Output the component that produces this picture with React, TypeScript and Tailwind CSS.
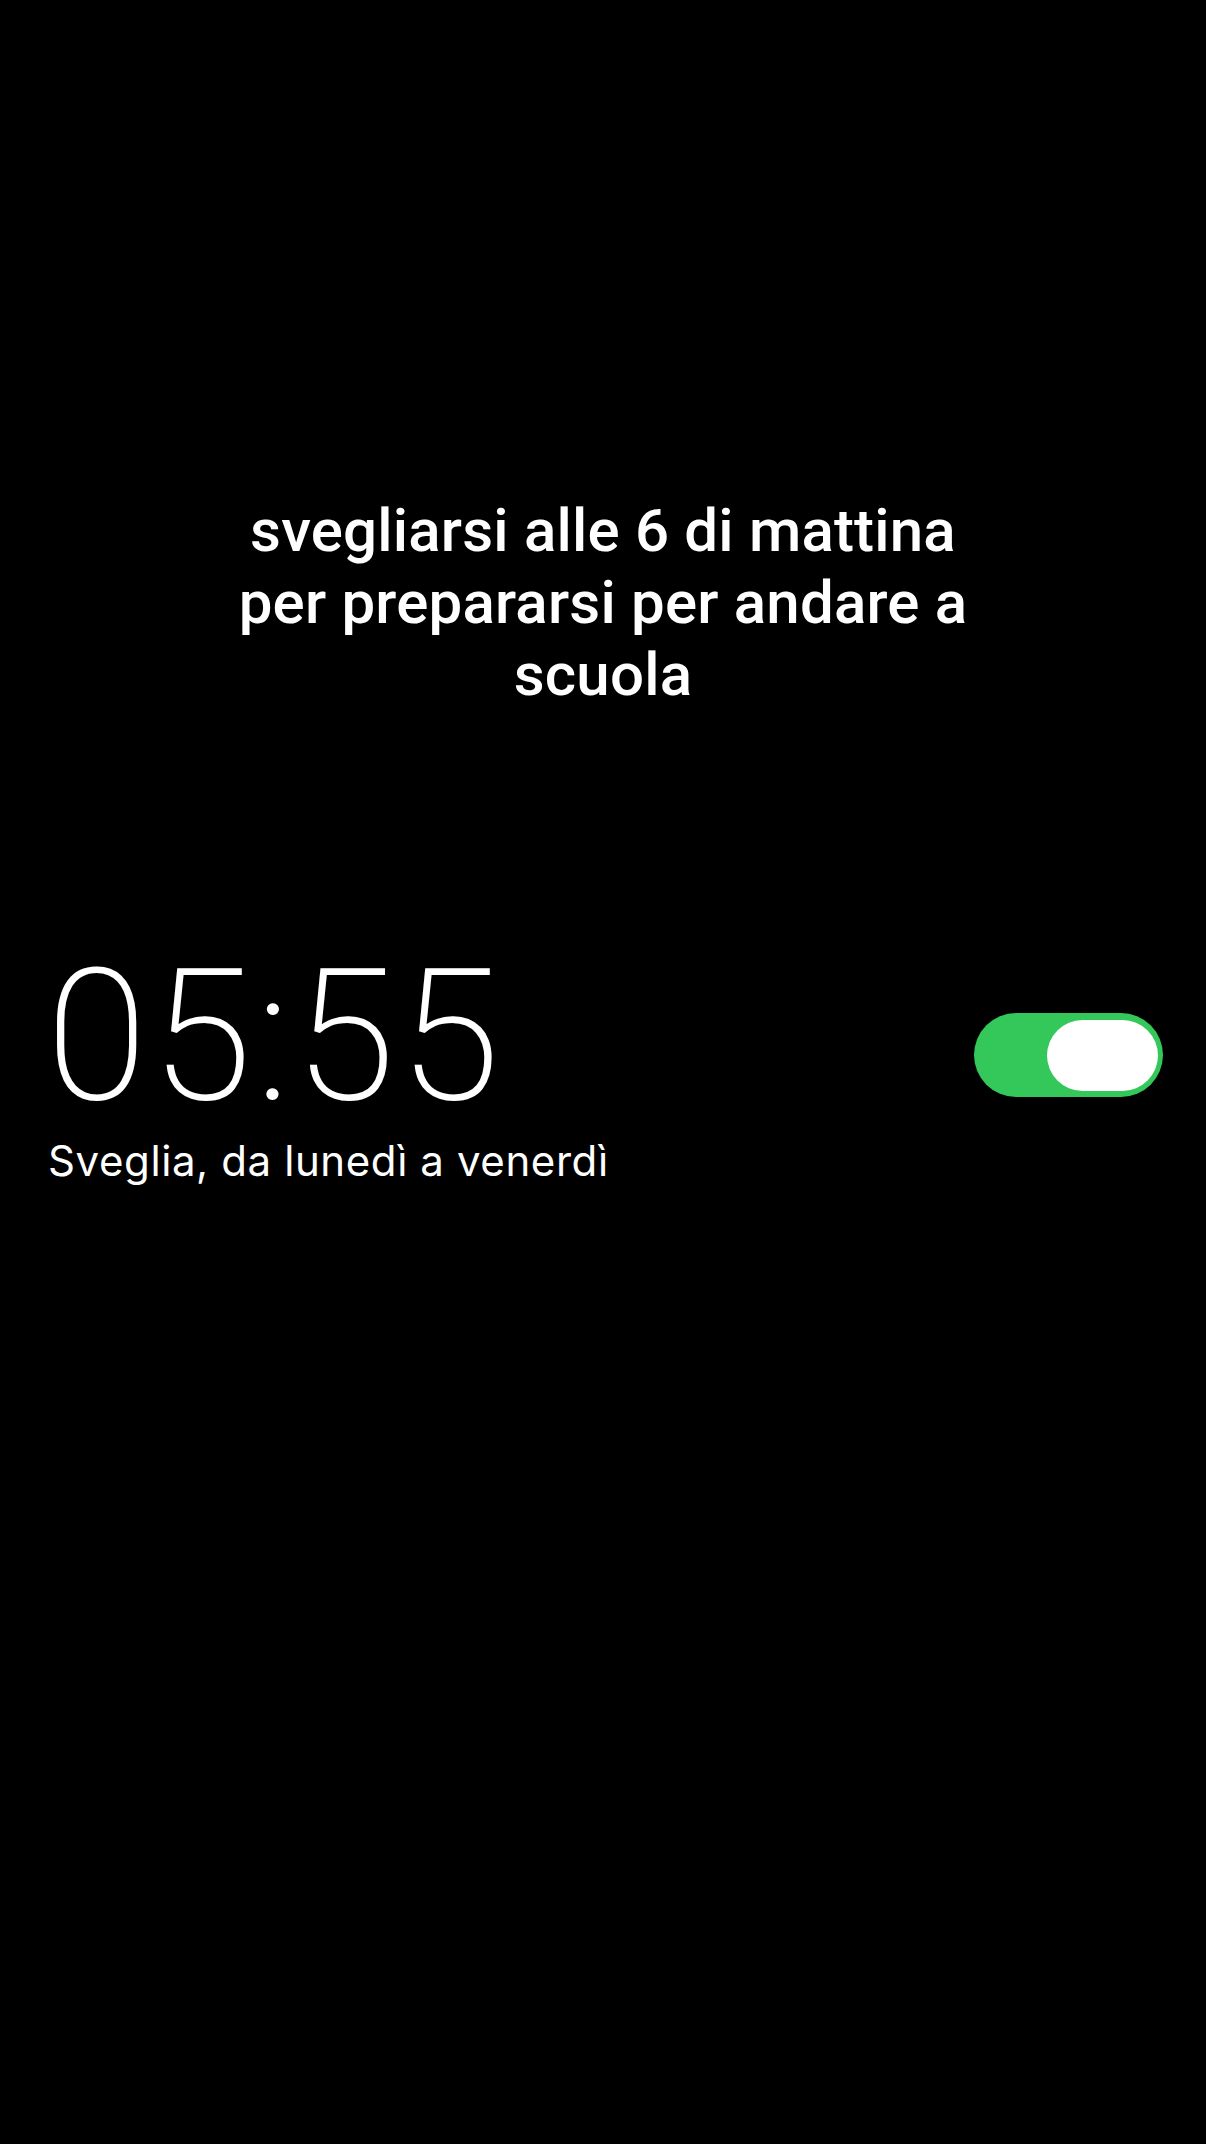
import React from "react";

export default function App() {
  return (
    <div className="w-[1206px] h-[2144px] bg-black text-white overflow-hidden">
      <div className="pt-[495px] text-center font-['Roboto',sans-serif] text-[60px] font-medium leading-[72px] tracking-[0.2px]">
        <div>svegliarsi alle 6 di mattina</div>
        <div>per prepararsi per andare a</div>
        <div>scuola</div>
      </div>
      <div className="mt-[255px] flex items-start justify-between pl-[46px] pr-[43px]">
        <div className="font-['Roboto',sans-serif] text-[184px] font-extralight leading-[140px] tracking-[3.5px]">05:55</div>
        <div className="mt-[47px] flex h-[84px] w-[189px] items-center justify-end rounded-full bg-[#34C759] px-[5px]">
          <div className="h-[71px] w-[111px] rounded-full bg-white" />
        </div>
      </div>
      <div className="mt-[30px] pl-[48px] font-['Inter',sans-serif] text-[42px] leading-[50px] tracking-[0.6px]">
        Sveglia, da lunedì a venerdì
      </div>
    </div>
  );
}
